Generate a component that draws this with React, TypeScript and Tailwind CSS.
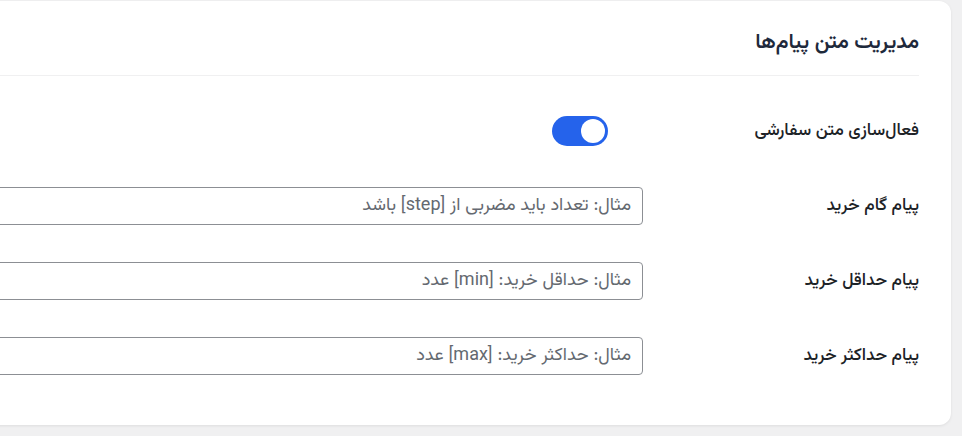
import React, { useState } from 'react';

const fields = [
  { label: 'پیام گام خرید', placeholder: 'مثال: تعداد باید مضربی از [step] باشد' },
  { label: 'پیام حداقل خرید', placeholder: 'مثال: حداقل خرید: [min] عدد' },
  { label: 'پیام حداکثر خرید', placeholder: 'مثال: حداکثر خرید: [max] عدد' },
];

function Toggle({ on, onChange }: { on: boolean; onChange: (v: boolean) => void }) {
  return (
    <button
      type="button"
      onClick={() => onChange(!on)}
      className={`mr-[35px] flex items-center w-[56px] h-[30px] rounded-full px-[3px] ${on ? 'bg-[#2563eb] justify-start' : 'bg-gray-300 justify-end'}`}
    >
      <span className="block w-[24px] h-[24px] rounded-full bg-white" />
    </button>
  );
}

export default function App() {
  const [enabled, setEnabled] = useState<boolean>(true);

  return (
    <div
      dir="rtl"
      className="h-[436px] overflow-hidden bg-[#f0f0f1] pt-px pr-[11px] font-['Vazirmatn','Noto_Sans_Arabic','Noto_Sans','DejaVu_Sans',sans-serif]"
    >
      <div className="w-[1400px] h-[424px] bg-white rounded-xl shadow-[0_1px_3px_rgba(0,0,0,0.08)] px-8 pt-[28px]">
        <h2 className="text-[21px] leading-[28px] font-semibold text-[#1e293b] pb-[18px] border-b border-[#f0f0f1]">
          مدیریت متن پیام‌ها
        </h2>

        <div className="pt-[17px]">
          <div className="flex items-center h-[75px]">
            <div className="w-[276px] shrink-0 text-[17.3px] font-medium text-[#1d2327]">فعال‌سازی متن سفارشی</div>
            <Toggle on={enabled} onChange={setEnabled} />
          </div>

          {fields.map((f) => (
            <div key={f.label} className="flex items-center h-[75px]">
              <label className="w-[276px] shrink-0 text-[17.3px] font-medium text-[#1d2327]">{f.label}</label>
              <input
                type="text"
                placeholder={f.placeholder}
                className="w-[800px] h-[38px] border border-[#8c8f94] rounded-[4px] px-[11px] text-[18px] text-[#1d2327] placeholder-[#646970] bg-white focus:outline-none"
              />
            </div>
          ))}
        </div>
      </div>
    </div>
  );
}
